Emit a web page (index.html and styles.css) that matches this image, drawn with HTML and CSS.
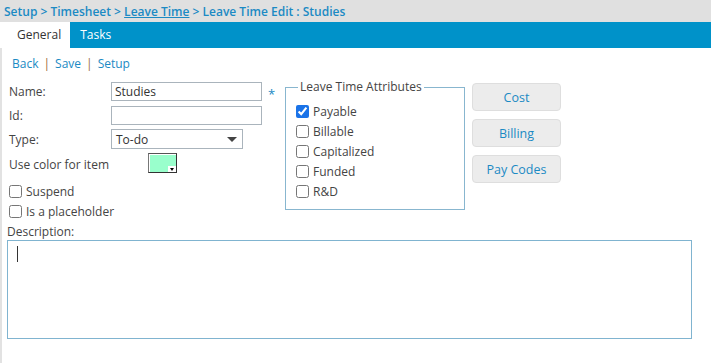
FILE: index.html
```html
<!DOCTYPE html>
<html lang="en">
<head>
    <meta charset="UTF-8">
    <title>Leave Time Edit : Studies</title>
    <link rel="stylesheet" href="styles.css">
</head>
<body>
    <div class="crumbs">
        <a href="#">Setup</a> &gt; <a href="#">Timesheet</a> &gt; <a href="#" class="current">Leave Time</a> &gt; Leave Time Edit : Studies
    </div>

    <div class="tabs">
        <div class="tab active">General</div>
        <div class="tab">Tasks</div>
    </div>

    <div class="content">
        <div class="actions">
            <a href="#">Back</a><span class="sep">|</span><a href="#">Save</a><span class="sep">|</span><a href="#">Setup</a>
        </div>

        <div class="main">
            <div class="fields">
                <div class="row">
                    <label class="label">Name:</label>
                    <input class="text" type="text" value="Studies">
                    <span class="required">*</span>
                </div>
                <div class="row">
                    <label class="label">Id:</label>
                    <input class="text" type="text">
                </div>
                <div class="row">
                    <label class="label">Type:</label>
                    <div class="select">
                        <span>To-do</span>
                        <span class="caret"></span>
                    </div>
                </div>
                <div class="row color-row">
                    <label class="label wide">Use color for item</label>
                    <div class="swatch"><span class="swatch-arrow"></span></div>
                </div>
                <label class="check"><input type="checkbox"> Suspend</label>
                <label class="check"><input type="checkbox"> Is a placeholder</label>
            </div>

            <fieldset class="attributes">
                <legend>Leave Time Attributes</legend>
                <label class="check"><input type="checkbox" checked> Payable</label>
                <label class="check"><input type="checkbox"> Billable</label>
                <label class="check"><input type="checkbox"> Capitalized</label>
                <label class="check"><input type="checkbox"> Funded</label>
                <label class="check"><input type="checkbox"> R&amp;D</label>
            </fieldset>

            <div class="buttons">
                <button class="btn">Cost</button>
                <button class="btn">Billing</button>
                <button class="btn">Pay Codes</button>
            </div>
        </div>

        <div class="description-label">Description:</div>
        <div class="description">
            <textarea></textarea>
            <span class="text-caret"></span>
        </div>
    </div>
</body>
</html>
```

FILE: styles.css
```css
/* Leave time edit form */
body {
    margin: 0;
    font-family: "Open Sans", "Noto Sans", sans-serif;
    font-size: 12px;
    color: #444;
    background: #fff;
}

a {
    color: #1b8ac4;
    text-decoration: none;
}

.crumbs {
    height: 22px;
    line-height: 24px;
    padding-left: 4px;
    background: #e0e0e0;
    color: #1b8ac4;
    font-size: 12px;
    font-weight: 600;
    white-space: nowrap;
}

.crumbs .current {
    text-decoration: underline;
}

.tabs {
    display: flex;
    height: 26px;
    background: #0092c9;
}

.tab {
    padding: 0 10px 0 10px;
    line-height: 26px;
    color: #fff;
}

.tab.active {
    padding: 0 9px 0 17px;
    background: #fff;
    color: #333;
}

.content {
    border-left: 2px solid #e2e2e2;
    padding-left: 5px;
    min-height: 315px;
}

.actions {
    padding: 8px 0 0 5px;
    line-height: 16px;
}

.sep {
    margin: 0 5px;
    color: #9a6a3a;
}

.main {
    display: flex;
    align-items: flex-start;
    margin-top: 7px;
}

.fields {
    width: 278px;
    padding-left: 2px;
    box-sizing: border-box;
}

.row {
    display: flex;
    align-items: center;
    height: 24px;
}

.label {
    width: 102px;
    flex: none;
}

.label.wide {
    width: 139px;
    padding-top: 3px;
}

.text {
    width: 151px;
    height: 19px;
    box-sizing: border-box;
    border: 1px solid #aab4bc;
    padding: 0 3px;
    font: inherit;
    color: #333;
}

.required {
    margin-left: 6px;
    color: #1b8ac4;
    font-size: 13px;
    line-height: 1;
    padding-top: 6px;
}

.select {
    display: flex;
    align-items: center;
    justify-content: space-between;
    width: 132px;
    height: 20px;
    box-sizing: border-box;
    border: 1px solid #aab4bc;
    padding: 0 5px 0 4px;
    color: #333;
}

.caret {
    width: 0;
    height: 0;
    border-left: 5px solid transparent;
    border-right: 5px solid transparent;
    border-top: 5px solid #444;
}

.swatch {
    position: relative;
    width: 29px;
    height: 20px;
    box-sizing: border-box;
    border: 1px solid;
    border-color: #555 #333 #333 #777;
    box-shadow: inset 1px 1px 0 #fff;
    background: #99ffcc;
}

.swatch-arrow {
    position: absolute;
    right: 0;
    bottom: 0;
    width: 8px;
    height: 6px;
    background: #fff;
}

.swatch-arrow::after {
    content: "";
    position: absolute;
    left: 2px;
    top: 2px;
    border-left: 2px solid transparent;
    border-right: 2px solid transparent;
    border-top: 3px solid #000;
}

.check {
    display: flex;
    align-items: center;
    height: 20px;
}

.check input {
    width: 13px;
    height: 13px;
    margin: 0 4px 0 0;
    accent-color: #1a73e8;
}

.color-row {
    margin-bottom: 6px;
}

.attributes {
    width: 180px;
    box-sizing: border-box;
    margin: 0;
    padding: 6px 0 8px 10px;
    border: 1px solid #88b6cf;
}

.attributes legend {
    margin-left: 2px;
    padding: 0 2px;
    line-height: 16px;
}

.buttons {
    display: flex;
    flex-direction: column;
    gap: 8px;
    margin: 4px 0 0 7px;
}

.btn {
    width: 89px;
    height: 28px;
    border: 1px solid #dedede;
    border-radius: 4px;
    background: #ececec;
    color: #1b8ac4;
    font: inherit;
    font-size: 12.5px;
}

.description-label {
    margin-top: 3px;
    line-height: 16px;
}

.description {
    position: relative;
    width: 685px;
}

.description textarea {
    display: block;
    width: 685px;
    height: 99px;
    box-sizing: border-box;
    margin: 0;
    border: 1px solid #80b4d0;
    resize: none;
    font: inherit;
}

.text-caret {
    position: absolute;
    left: 10px;
    top: 6px;
    width: 1px;
    height: 16px;
    background: #333;
}
```
